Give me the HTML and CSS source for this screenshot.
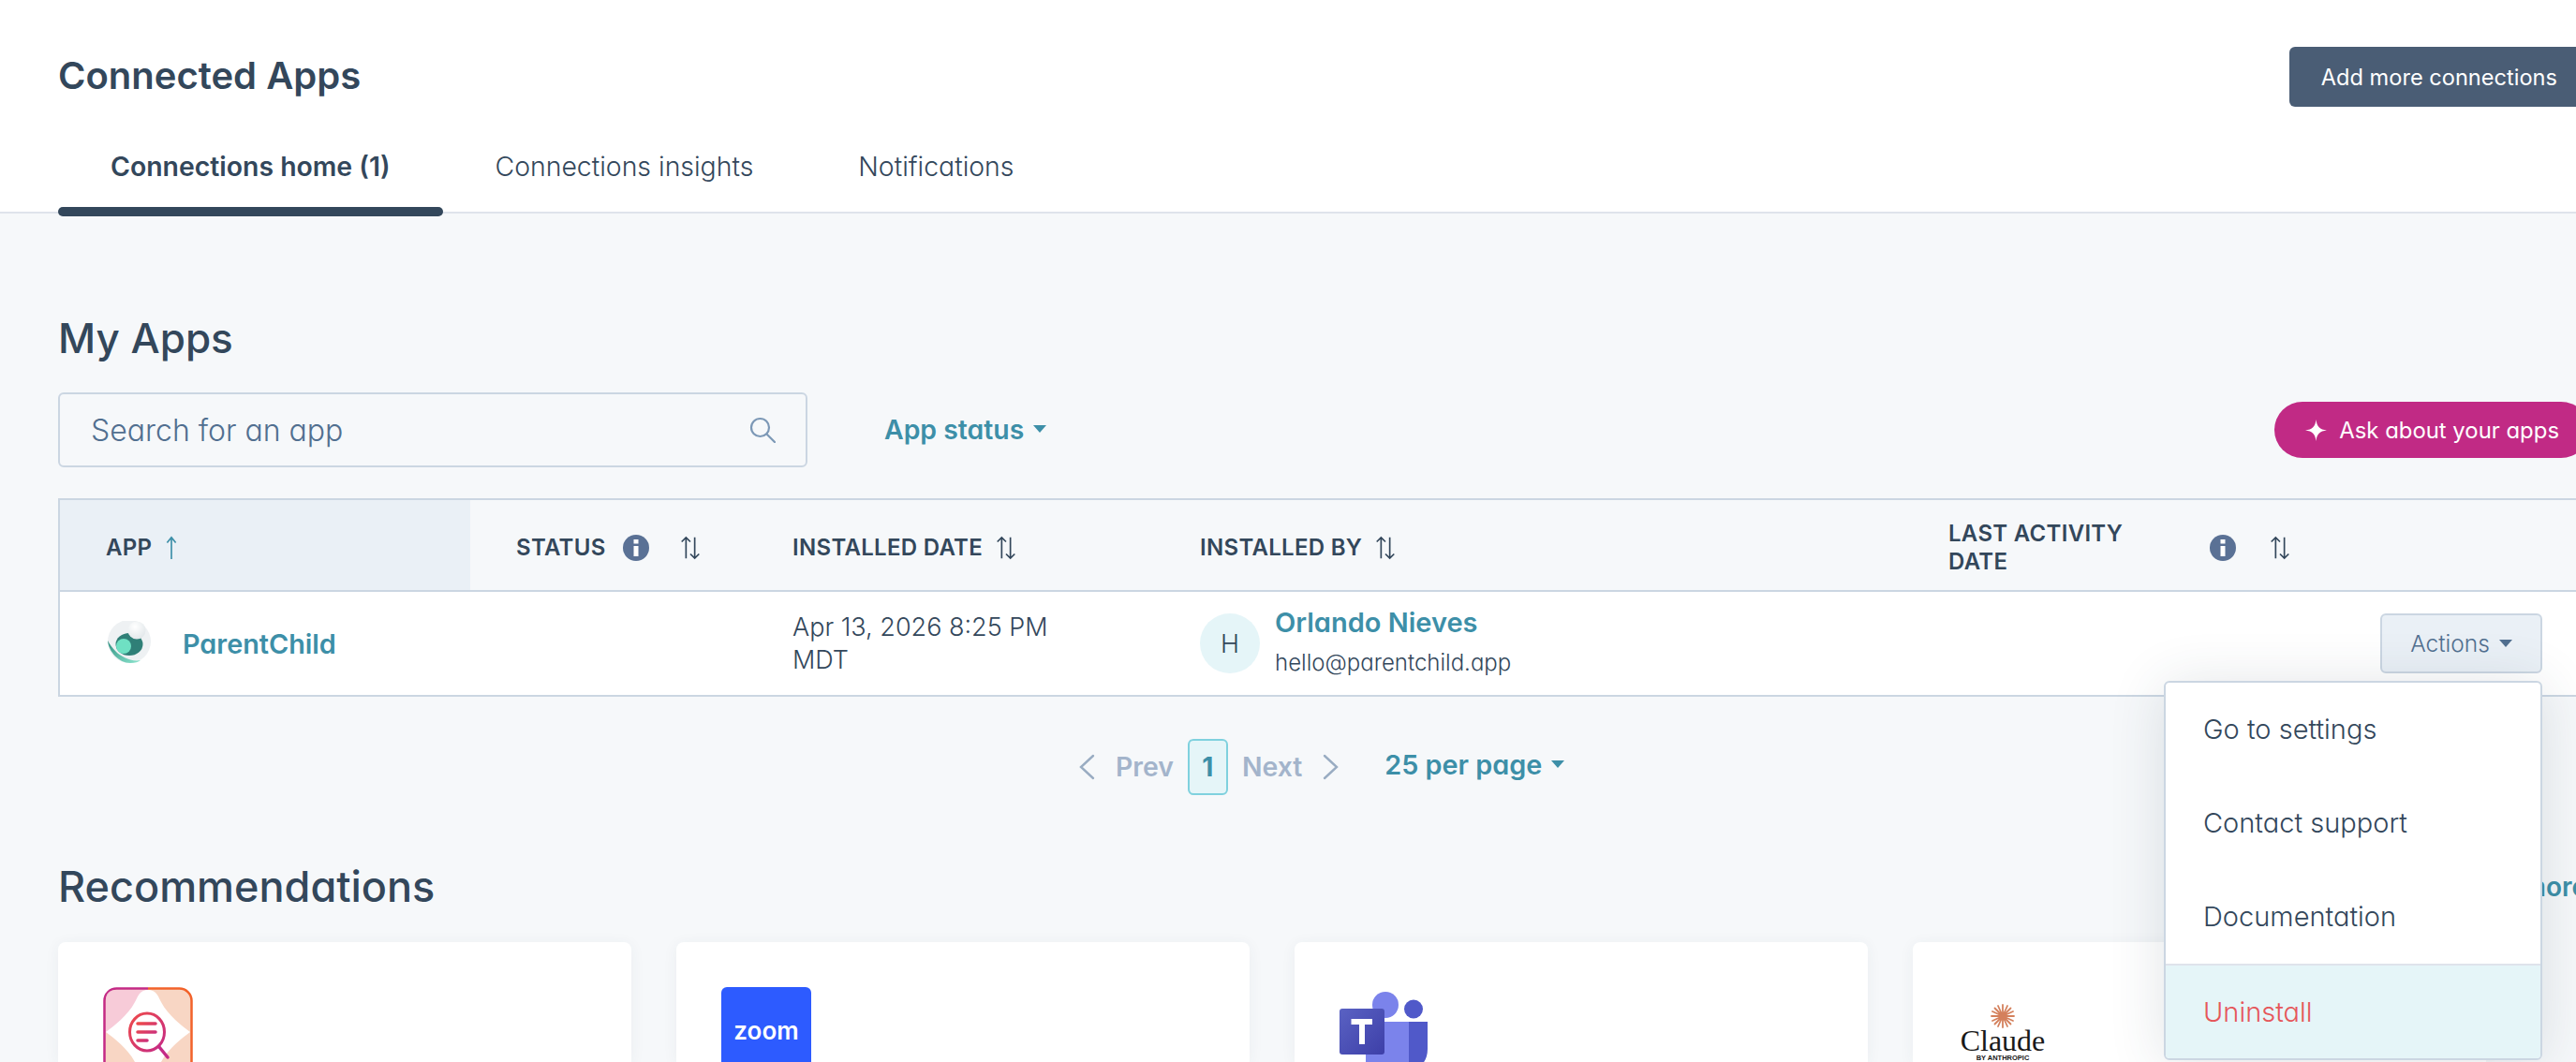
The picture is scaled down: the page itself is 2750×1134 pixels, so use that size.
FILE: index.html
```html
<!DOCTYPE html>
<html lang="en">

<head>
	<title>Connected Apps</title>
	<meta charset="UTF-8">
	<link rel="stylesheet" href="styles.css">
</head>

<body>
	<div class="page">
		<header class="top">
			<div class="title-row">
				<h1 class="title">Connected Apps</h1>
				<a class="btn-dark">Add more connections</a>
			</div>
			<nav class="tabs">
				<a class="tab active">Connections home (1)</a>
				<a class="tab">Connections insights</a>
				<a class="tab">Notifications</a>
			</nav>
		</header>

		<main class="content">
			<h2 class="heading">My Apps</h2>
			<div class="toolbar">
				<div class="search">
					<span>Search for an app</span>
					<svg class="search-icon" viewBox="0 0 28 28" fill="none" stroke="#7c98b6" stroke-width="2.2" stroke-linecap="round">
						<circle cx="11.5" cy="11.5" r="9.5"></circle>
						<path d="M18.5 18.5 L27 27"></path>
					</svg>
				</div>
				<a class="link-drop">App status<i class="caret"></i></a>
				<a class="btn-ask">
					<svg class="spark" viewBox="0 0 24 24" fill="#fff"><path d="M12 0 C13 8 16 11 24 12 C16 13 13 16 12 24 C11 16 8 13 0 12 C8 11 11 8 12 0 Z"></path></svg>
					Ask about your apps
				</a>
			</div>

			<div class="table-wrap">
				<table class="apps">
					<colgroup>
						<col class="col-app">
						<col class="col-status">
						<col class="col-date">
						<col class="col-by">
						<col>
					</colgroup>
					<thead>
						<tr>
							<th class="sorted">
								<div class="th-in">APP
									<svg class="arrow-up" viewBox="0 0 12 28" fill="none" stroke="#3d8fa8" stroke-width="1.8"><path d="M6 27 V2 M1 8 L6 2 L11 8"></path></svg>
								</div>
							</th>
							<th>
								<div class="th-in">STATUS
									<svg class="info info-status" viewBox="0 0 28 28"><circle cx="14" cy="14" r="14" fill="#5a7195"></circle><rect x="11.5" y="5" width="5" height="4.5" fill="#fff"></rect><rect x="11.5" y="12" width="5" height="11" fill="#fff"></rect></svg>
									<svg class="sort sort-status" viewBox="0 0 22 28" fill="none" stroke="#33475b" stroke-width="1.8"><path d="M6 26 V2 M1 7 L6 2 L11 7 M16 2 V26 M11 21 L16 26 L21 21"></path></svg>
								</div>
							</th>
							<th>
								<div class="th-in">INSTALLED DATE
									<svg class="sort" viewBox="0 0 22 28" fill="none" stroke="#33475b" stroke-width="1.8"><path d="M6 26 V2 M1 7 L6 2 L11 7 M16 2 V26 M11 21 L16 26 L21 21"></path></svg>
								</div>
							</th>
							<th>
								<div class="th-in">INSTALLED BY
									<svg class="sort" viewBox="0 0 22 28" fill="none" stroke="#33475b" stroke-width="1.8"><path d="M6 26 V2 M1 7 L6 2 L11 7 M16 2 V26 M11 21 L16 26 L21 21"></path></svg>
								</div>
							</th>
							<th>
								<div class="th-in">
									<span class="th-wrap">LAST ACTIVITY DATE</span>
									<svg class="info" viewBox="0 0 28 28"><circle cx="14" cy="14" r="14" fill="#5a7195"></circle><rect x="11.5" y="5" width="5" height="4.5" fill="#fff"></rect><rect x="11.5" y="12" width="5" height="11" fill="#fff"></rect></svg>
									<svg class="sort sort-last" viewBox="0 0 22 28" fill="none" stroke="#33475b" stroke-width="1.8"><path d="M6 26 V2 M1 7 L6 2 L11 7 M16 2 V26 M11 21 L16 26 L21 21"></path></svg>
								</div>
							</th>
						</tr>
					</thead>
					<tbody>
						<tr>
							<td>
								<div class="app-cell">
									<svg class="app-logo" viewBox="0 0 48 48">
										<defs>
											<radialGradient id="pcWhite" cx="40%" cy="30%" r="80%"><stop offset="0" stop-color="#fff"></stop><stop offset="1" stop-color="#dfe5e8"></stop></radialGradient>
											<linearGradient id="pcLeaf" x1="0" y1="0" x2="1" y2="1"><stop offset="0" stop-color="#2f8f80"></stop><stop offset="1" stop-color="#8ee6cf"></stop></linearGradient>
										</defs>
										<circle cx="25" cy="22" r="23" fill="#eef1f3"></circle>
										<ellipse cx="25" cy="25" rx="14.5" ry="12" fill="#2f7f77"></ellipse>
										<circle cx="19" cy="27" r="8" fill="#6fe0c3"></circle>
										<path d="M2 21 C3 33 14 45 26 45 C31 45 35 44 37 42 C27 44 16 38 11 33 C7 29 4 25 2 21 Z" fill="url(#pcLeaf)"></path>
										<circle cx="33" cy="10" r="9.5" fill="url(#pcWhite)"></circle>
									</svg>
									<a class="app-name">ParentChild</a>
								</div>
							</td>
							<td></td>
							<td class="date">Apr 13, 2026 8:25 PM<br>MDT</td>
							<td>
								<div class="user">
									<span class="avatar">H</span>
									<div class="user-text">
										<a class="user-name">Orlando Nieves</a>
										<span class="user-mail">hello@parentchild.app</span>
									</div>
								</div>
							</td>
							<td>
								<div class="actions-cell">
									<div class="actions">
										<a class="btn-actions">Actions<i class="caret"></i></a>
										<ul class="menu">
											<li>Go to settings</li>
											<li>Contact support</li>
											<li>Documentation</li>
											<li class="danger">Uninstall</li>
										</ul>
									</div>
								</div>
							</td>
						</tr>
					</tbody>
				</table>
			</div>

			<div class="pager">
				<svg class="chev" viewBox="0 0 18 28" fill="none" stroke="#99acc2" stroke-width="2.4" stroke-linecap="round"><path d="M16 2 L3 14 L16 26"></path></svg>
				<span class="pager-off prev">Prev</span>
				<span class="page-num">1</span>
				<span class="pager-off next">Next</span>
				<svg class="chev" viewBox="0 0 18 28" fill="none" stroke="#99acc2" stroke-width="2.4" stroke-linecap="round"><path d="M2 2 L15 14 L2 26"></path></svg>
				<a class="link-drop per-page">25 per page<i class="caret"></i></a>
			</div>

			<div class="rec-head">
				<h2 class="heading">Recommendations</h2>
				<a class="see-more">See more</a>
			</div>

			<div class="cards">
				<div class="card">
					<svg class="card-logo" viewBox="0 0 96 96">
						<defs>
							<linearGradient id="edge" x1="0" y1="0" x2="1" y2="0"><stop offset="0.5" stop-color="#c42a86"></stop><stop offset="0.5" stop-color="#f2622a"></stop></linearGradient>
							<linearGradient id="glass" x1="0" y1="0" x2="1" y2="1"><stop offset="0" stop-color="#ee4a4a"></stop><stop offset="1" stop-color="#c42a86"></stop></linearGradient>
						</defs>
						<rect x="1.5" y="1.5" width="93" height="93" rx="13" fill="#f8d6c4" stroke="url(#edge)" stroke-width="2.5"></rect>
						<path d="M3 14 Q3 3 14 3 H48 V48 H3 Z" fill="#f6c8dd" opacity="0.8"></path>
						<path d="M48 3 C56 3 58 8 62 16 C70 31 84 41 93 48 C84 55 70 65 62 80 C58 88 56 93 48 93 C40 93 38 88 34 80 C26 65 12 55 3 48 C12 41 26 31 34 16 C38 8 40 3 48 3 Z" fill="#fff"></path>
						<ellipse cx="47" cy="48" rx="18.5" ry="20" fill="none" stroke="url(#glass)" stroke-width="3"></ellipse>
						<path d="M60 64 L69 75" stroke="#c42a86" stroke-width="3.5" stroke-linecap="round"></path>
						<path d="M37 39 H56 M37 48 H56 M37 57 H47" stroke="url(#glass)" stroke-width="3.5" stroke-linecap="round"></path>
					</svg>
				</div>
				<div class="card">
					<div class="zoom-logo">zoom</div>
				</div>
				<div class="card">
					<svg class="card-logo" viewBox="0 0 96 96">
						<defs>
							<linearGradient id="tBox" x1="0" y1="0" x2="1" y2="1"><stop offset="0" stop-color="#5a62c3"></stop><stop offset="1" stop-color="#3d3fa8"></stop></linearGradient>
						</defs>
						<circle cx="79" cy="23.5" r="10" fill="#5059c9"></circle>
						<path d="M66 37 H94 V66 C94 78 88 85 81 85 C74 85 70 80 70 72 Z" fill="#5059c9"></path>
						<circle cx="49" cy="19" r="14" fill="#7b83eb"></circle>
						<path d="M28 37 H74 V80 C74 100 62 112 50 112 C38 112 28 100 28 86 Z" fill="#7b83eb"></path>
						<rect x="0" y="23" width="48" height="49" rx="3" fill="url(#tBox)"></rect>
						<path d="M12.5 34 H35 V40 H27 V61 H21 V40 H12.5 Z" fill="#fff"></path>
					</svg>
				</div>
				<div class="card">
					<div class="claude-logo">
						<svg class="claude-star" viewBox="0 0 26 26" stroke="#d4805c" stroke-width="1.8" stroke-linecap="round">
							<path d="M13 1 V25 M1 13 H25 M4.5 4.5 L21.5 21.5 M21.5 4.5 L4.5 21.5 M8 2 L18 24 M18 2 L8 24 M2 8 L24 18 M24 8 L2 18"></path>
						</svg>
						<span class="claude-name">Claude</span>
						<span class="claude-by">BY ANTHROPIC</span>
					</div>
				</div>
			</div>
		</main>
	</div>
</body>

</html>
```

FILE: styles.css
```css
:root {
	--text: #33475b;
	--teal: #3d8fa8;
	--line: #cbd6e2;
	--bg: #f6f8fa;
}

html,
body {
	margin: 0;
	padding: 0;
	height: 1134px;
	overflow: hidden;
	background: var(--bg);
}

body {
	font-family: Inter, "Noto Sans", sans-serif;
	font-feature-settings: "cv11";
	color: var(--text);
}

.page {
	width: 2770px;
}

.top {
	background: #fff;
	border-bottom: 2px solid #dfe3eb;
	padding: 50px 6px 0 62px;
	height: 176px;
}

.title-row {
	display: flex;
	align-items: center;
	justify-content: space-between;
	height: 64px;
}

.title {
	margin: 0 0 2px;
	font-size: 40px;
	line-height: 62px;
	font-weight: 600;
	color: #33475b;
}

.btn-dark {
	display: flex;
	align-items: center;
	height: 64px;
	padding: 0 34px;
	font-size: 23.6px;
	font-weight: 400;
	color: #fff;
	background: #4a5d75;
	border-radius: 6px;
}

.tabs {
	display: flex;
	height: 112px;
}

.tab {
	position: relative;
	display: block;
	padding: 44px 56px 0;
	font-size: 28.4px;
	line-height: 40px;
	font-weight: 300;
}

.tab.active {
	font-weight: 600;
}

.tab.active::after {
	content: '';
	position: absolute;
	left: 0;
	right: 0;
	bottom: -5px;
	height: 10px;
	background: #33475b;
	border-radius: 5px;
}

.content {
	padding: 108px 6px 0 62px;
}

.heading {
	margin: 0;
	font-size: 44px;
	line-height: 50px;
	font-weight: 500;
	color: #33475b;
}

.toolbar {
	display: flex;
	align-items: center;
	margin-top: 33px;
	height: 80px;
}

.search {
	display: flex;
	align-items: center;
	justify-content: space-between;
	box-sizing: border-box;
	width: 800px;
	height: 80px;
	padding: 0 32px 0 33px;
	border: 2px solid var(--line);
	border-radius: 6px;
	font-size: 32px;
	font-weight: 300;
	color: #516f90;
}

.search-icon {
	width: 28px;
	height: 28px;
}

.link-drop {
	display: inline-flex;
	align-items: center;
	font-size: 28.4px;
	font-weight: 600;
	color: var(--teal);
}

.toolbar .link-drop {
	margin-left: 82px;
	margin-top: -2px;
}

.caret {
	display: inline-block;
	width: 0;
	height: 0;
	margin-left: 10px;
	border-left: 7px solid transparent;
	border-right: 7px solid transparent;
	border-top: 8px solid currentColor;
}

.btn-ask {
	display: flex;
	align-items: center;
	gap: 13px;
	height: 60px;
	margin-left: auto;
	padding: 0 32px 0 33px;
	font-size: 23.9px;
	color: #fff;
	background: #c12a85;
	border-radius: 30px;
}

.spark {
	width: 23px;
	height: 23px;
}

.table-wrap {
	margin-top: 33px;
	border: 2px solid var(--line);
	border-right: 0;
}

.apps {
	width: 100%;
	table-layout: fixed;
	border-collapse: separate;
	border-spacing: 0;
}

.col-app {
	width: 438px;
}

.col-status {
	width: 295px;
}

.col-date {
	width: 435px;
}

.col-by {
	width: 799px;
}

.apps th {
	height: 98px;
	padding: 6px 0 0 49px;
	box-sizing: border-box;
	border-bottom: 2px solid var(--line);
	text-align: left;
	font-size: 24px;
	font-weight: 600;
	letter-spacing: 0.3px;
	line-height: 30px;
	background: var(--bg);
}

.apps th.sorted {
	background: #eaf0f6;
}

.th-in {
	display: flex;
	align-items: center;
}

.arrow-up {
	width: 12px;
	height: 26px;
	margin-left: 15px;
}

.sort {
	width: 22px;
	height: 26px;
	margin-left: 14px;
}

.info {
	width: 28px;
	height: 28px;
}

.info-status {
	margin-left: 18px;
}

.sort-status {
	margin-left: 33px;
}

.th-wrap {
	width: 200px;
	margin-right: 79px;
}

.sort-last {
	margin-left: 36px;
}

.apps td {
	height: 110px;
	padding: 0 0 0 49px;
	background: #fff;
	font-size: 27px;
	font-weight: 300;
	line-height: 35px;
}

.apps td:last-child {
	padding: 0;
}

.app-cell {
	display: flex;
	align-items: center;
	gap: 34px;
}

.app-logo {
	width: 48px;
	height: 48px;
}

.app-name {
	font-size: 28.8px;
	font-weight: 600;
	color: var(--teal);
}

.user {
	display: flex;
	align-items: center;
	gap: 16px;
}

.avatar {
	display: flex;
	align-items: center;
	justify-content: center;
	width: 64px;
	height: 64px;
	border-radius: 50%;
	background: #e5f5f8;
	font-size: 27px;
	font-weight: 300;
}

.user-text {
	display: flex;
	flex-direction: column;
	gap: 8px;
	margin-top: -2px;
}

.user-name {
	font-size: 29px;
	font-weight: 600;
	line-height: 36px;
	color: var(--teal);
}

.user-mail {
	font-size: 24px;
	font-weight: 300;
	line-height: 34px;
}

.actions-cell {
	display: flex;
	justify-content: flex-end;
	padding-right: 50px;
}

.actions {
	position: relative;
}

.btn-actions {
	display: flex;
	align-items: center;
	justify-content: center;
	box-sizing: border-box;
	width: 173px;
	height: 64px;
	border: 2px solid var(--line);
	border-radius: 6px;
	background: #eaf0f6;
	font-size: 24.5px;
	font-weight: 300;
	color: #516f90;
}

.menu {
	position: absolute;
	top: 72px;
	right: 0;
	z-index: 5;
	box-sizing: border-box;
	width: 404px;
	margin: 0;
	padding: 0;
	list-style: none;
	background: #fff;
	border: 2px solid var(--line);
	border-radius: 6px;
	box-shadow: 0 4px 60px rgba(45, 62, 80, 0.14);
	overflow: hidden;
}

.menu li {
	height: 100px;
	padding: 0 40px;
	font-size: 29px;
	font-weight: 300;
	line-height: 100px;
}

.menu .danger {
	height: 99px;
	border-top: 2px solid #dfe3eb;
	background: #e5f5f8;
	color: #e5565a;
}

.pager {
	display: flex;
	align-items: center;
	justify-content: flex-start;
	height: 60px;
	margin-top: 45px;
	padding-left: 1089px;
}

.chev {
	width: 18px;
	height: 28px;
}

.pager-off {
	font-size: 28.4px;
	font-weight: 600;
	color: #a3b4cb;
	margin-top: -2px;
}

.prev {
	margin-left: 22px;
	margin-right: 15px;
}

.next {
	margin-left: 15px;
	margin-right: 22px;
}

.page-num {
	display: flex;
	align-items: center;
	justify-content: center;
	box-sizing: border-box;
	width: 43px;
	height: 60px;
	border: 2px solid #7fd1de;
	border-radius: 6px;
	background: #e5f5f8;
	font-size: 28px;
	font-weight: 700;
	color: var(--teal);
}

.per-page {
	margin-left: 48px;
	margin-top: -6px;
	font-size: 28.8px;
}

.rec-head {
	display: flex;
	align-items: center;
	justify-content: space-between;
	margin-top: 73px;
}

.rec-head .heading {
	font-size: 45px;
}

.see-more {
	font-size: 28px;
	font-weight: 600;
	color: var(--teal);
	padding-right: 2px;
}

.cards {
	display: grid;
	grid-template-columns: repeat(4, 612px);
	gap: 48px;
	margin-top: 34px;
}

.card {
	height: 128px;
	box-sizing: border-box;
	padding: 48px 0 0 48px;
	background: #fff;
	border-radius: 8px 8px 0 0;
	box-shadow: 0 2px 16px rgba(45, 62, 80, 0.06);
	overflow: hidden;
}

.card-logo {
	display: block;
	width: 96px;
	height: 96px;
	overflow: visible;
}

.zoom-logo {
	width: 96px;
	height: 96px;
	border-radius: 6px 6px 0 0;
	background: #2d5bff;
	color: #fff;
	font-size: 26px;
	font-weight: 600;
	line-height: 94px;
	text-align: center;
}

.claude-logo {
	display: flex;
	flex-direction: column;
	align-items: center;
	width: 96px;
	margin-top: 18px;
}

.claude-star {
	width: 26px;
	height: 26px;
	flex: none;
}

.claude-name {
	font-family: "Liberation Serif", serif;
	font-size: 32px;
	line-height: 26px;
	color: #191919;
}

.claude-by {
	font-family: "Liberation Sans", sans-serif;
	font-size: 7.5px;
	font-weight: 700;
	line-height: 12px;
	color: #191919;
}
```
